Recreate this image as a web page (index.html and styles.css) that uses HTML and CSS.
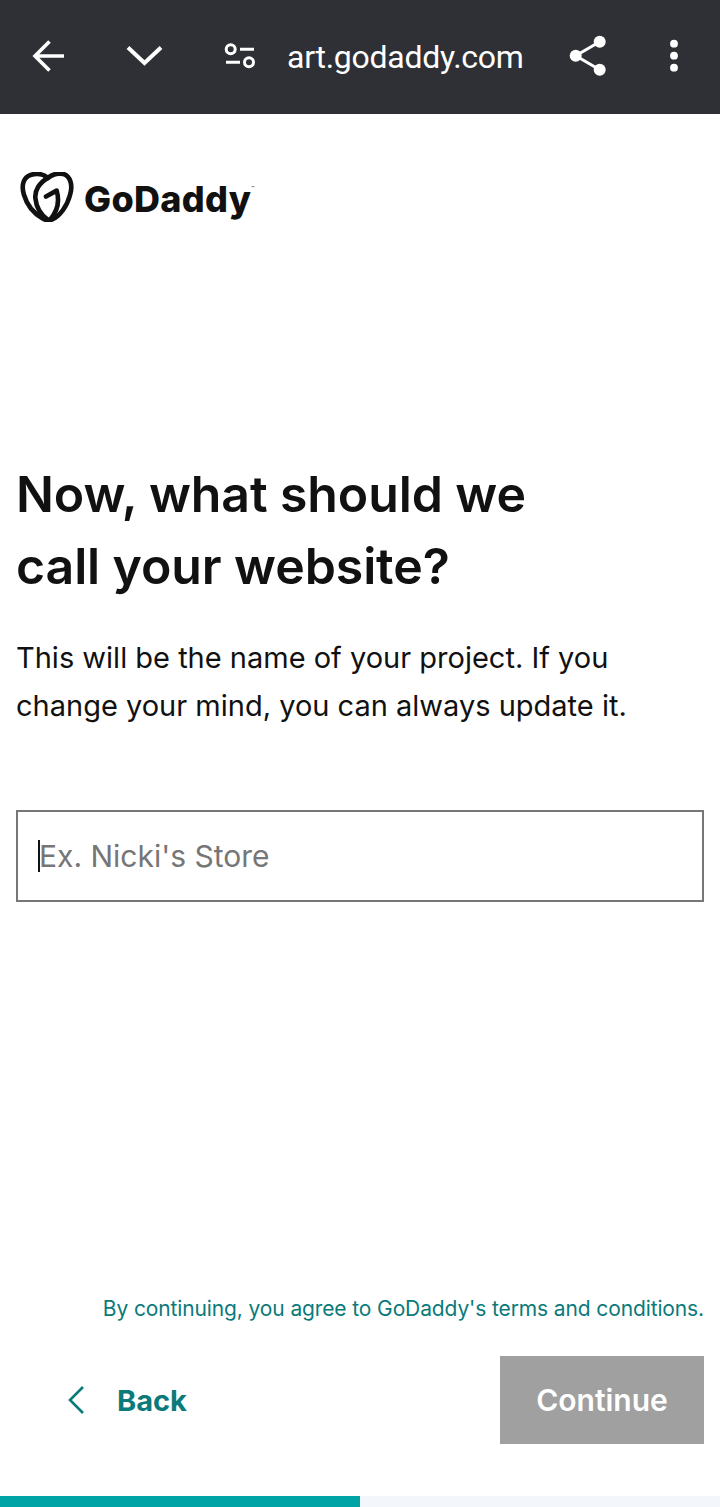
FILE: index.html
```html
<!DOCTYPE html>
<html>
<head>
	<title>GoDaddy - Name your website</title>
	<link rel="stylesheet" href="styles.css">
</head>
<body>
	<div class="toolbar">
		<svg class="back-arrow" width="36" height="114" viewBox="30 0 36 114"><path d="M64 56H35M49.500 41.500 35 56l14.500 14.500" fill="none" stroke="#fff" stroke-width="3.600"/></svg>
		<svg class="chevron-down" width="40" height="114" viewBox="124 0 40 114"><path d="M128 47.500 144.500 63 161 47.500" fill="none" stroke="#fff" stroke-width="4"/></svg>
		<svg class="site-settings" width="32" height="114" viewBox="224 0 32 114"><g fill="none" stroke="#fff" stroke-width="3"><circle cx="230.700" cy="49.300" r="4.500"/><circle cx="249" cy="62.300" r="4.500"/><path d="M240 49.300h14M226 62.300h14"/></g></svg>
		<div class="url">art.godaddy.com</div>
		<svg class="share" width="40" height="114" viewBox="568 0 40 114"><circle cx="599.700" cy="41.700" r="6" fill="#fff"/><circle cx="575.700" cy="55.700" r="6" fill="#fff"/><circle cx="599.700" cy="69.700" r="6" fill="#fff"/><path d="M599.700 41.700l-24 14 24 14" fill="none" stroke="#fff" stroke-width="3"/></svg>
		<svg class="more" width="12" height="114" viewBox="668 0 12 114"><circle cx="674" cy="43.700" r="3.900" fill="#fff"/><circle cx="674" cy="55.700" r="3.900" fill="#fff"/><circle cx="674" cy="67.700" r="3.900" fill="#fff"/></svg>
	</div>

	<div class="page">
		<div class="logo">
			<svg width="54" height="50" viewBox="6 7 56 51" preserveAspectRatio="none"><g fill="none" stroke="#111" stroke-width="4.800" stroke-linecap="round" stroke-linejoin="round"><path d="M35 13C40 9 46 8 51 9 58 11 61 20 58 30 55 42 47 52 40 55 36 57 32 56 29 54 20 49 13 40 10 30 7 20 10 12 17 10 24 8 30 9 35 13Z"/><path d="M35 13C26 18 21 26 22 34 23 44 28 51 35 56"/><path d="M33 32 44 26C47 36 45 47 37 56"/></g></svg>
			<span class="logo-name">GoDaddy<sup class="tm">™</sup></span>
		</div>

		<h1 class="title">Now, what should we<br>call your website?</h1>
		<p class="intro">This will be the name of your project. If you change your mind, you can always update it.</p>

		<div class="name-field">
			<span class="caret"></span>
			<span class="placeholder">Ex. Nicki's Store</span>
		</div>

		<div class="terms">By continuing, you agree to GoDaddy's terms and conditions.</div>

		<div class="actions">
			<a class="back">
				<svg width="18" height="30" viewBox="0 0 18 30"><path d="M16 2 3 15l13 13" fill="none" stroke="#0a7a7a" stroke-width="2.600"/></svg>
				<span>Back</span>
			</a>
			<button class="continue">Continue</button>
		</div>
	</div>

	<div class="progress"><div class="progress-done"></div></div>
</body>
</html>
```
FILE: styles.css
```css
* {
	padding: 0px;
	margin: 0px;
	box-sizing: border-box;
}

body {
	width: 720px;
	height: 1507px;
	display: flex;
	flex-direction: column;
	background-color: #ffffff;
	font-family: "Inter", "Liberation Sans", sans-serif;
	color: #111111;
	overflow: hidden;
}

.toolbar {
	height: 114px;
	flex-shrink: 0;
	display: flex;
	align-items: center;
	background-color: #2e3035;
	padding-left: 30px;
}

.chevron-down {
	margin-left: 58px;
}

.site-settings {
	margin-left: 60px;
}

.url {
	margin-left: 31px;
	width: 281px;
	font-family: "Roboto", sans-serif;
	font-size: 32px;
	letter-spacing: -0.27px;
	color: #ffffff;
}

.more {
	margin-left: 60px;
}

.page {
	flex: 1;
	display: flex;
	flex-direction: column;
	padding: 0 16px;
}

.logo {
	display: flex;
	align-items: center;
	gap: 10px;
	margin: 58px 0 0 4px;
	height: 50px;
}

.logo-name {
	margin-top: 3px;
	font-weight: 800;
	font-size: 36px;
	letter-spacing: 0.3px;
	color: #111111;
}

.tm {
	font-size: 5px;
	font-weight: 400;
	vertical-align: 22px;
	line-height: 0;
}

.title {
	margin-top: 236px;
	font-size: 50px;
	line-height: 72px;
	font-weight: 600;
	letter-spacing: -0.1px;
}

.intro {
	margin-top: 32px;
	width: 640px;
	font-size: 29px;
	line-height: 48px;
}

.name-field {
	margin-top: 80px;
	height: 92px;
	display: flex;
	align-items: center;
	padding-left: 20px;
	border: 2px solid #767676;
}

.caret {
	width: 2px;
	height: 32px;
	margin-right: -1px;
	background-color: #111111;
}

.placeholder {
	font-size: 30px;
	color: #767676;
}

.terms {
	margin-top: auto;
	text-align: right;
	font-size: 21px;
	letter-spacing: -0.12px;
	line-height: 28px;
	color: #0a7a7a;
}

.actions {
	display: flex;
	justify-content: space-between;
	align-items: center;
	margin-top: 33px;
	margin-bottom: 52px;
}

.back {
	display: flex;
	align-items: center;
	gap: 32px;
	padding-left: 51px;
	font-size: 29px;
	font-weight: 700;
	color: #0a7a7a;
}

.continue {
	width: 204px;
	height: 88px;
	border: none;
	background-color: #a0a0a0;
	color: #ffffff;
	font-family: inherit;
	font-size: 30px;
	font-weight: 600;
}

.progress {
	height: 11px;
	flex-shrink: 0;
	background-color: #f3f6fb;
}

.progress-done {
	width: 50%;
	height: 100%;
	background-color: #00a4a6;
}
```
